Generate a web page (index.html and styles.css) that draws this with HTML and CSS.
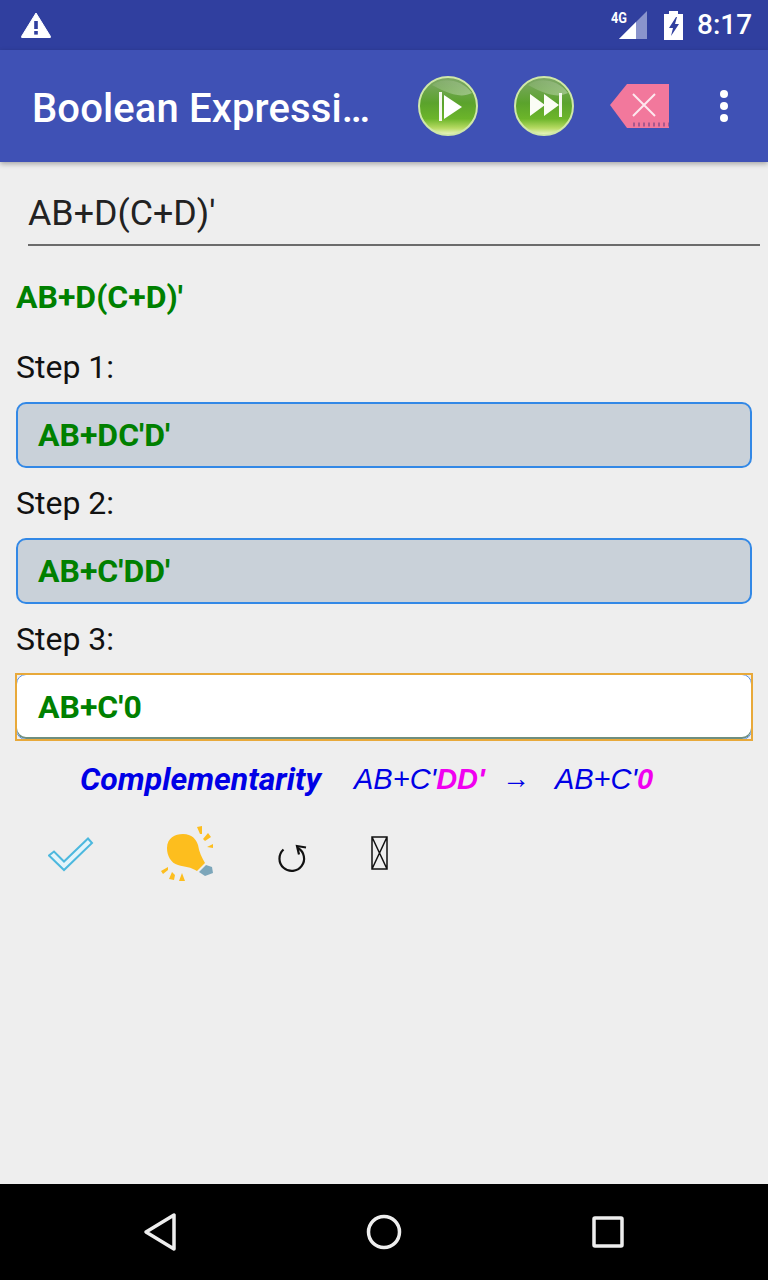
FILE: index.html
```html
<!DOCTYPE html>
<html lang="en">
<head>
<meta charset="utf-8">
<title>Boolean Expressions</title>
<link rel="stylesheet" href="styles.css">
</head>
<body>
<div class="phone">
  <header class="status">
    <svg class="warn" width="30" height="26" viewBox="0 0 30 26"><path d="M15 1 L29.500 24.500 a.6 .6 0 0 1 -.5 1 H1 a.6 .6 0 0 1 -.5 -1 Z" fill="#fff" stroke="#fff" stroke-linejoin="round"/><rect x="13.200" y="9" width="3.600" height="8" fill="#303f9f"/><rect x="13.200" y="19" width="3.600" height="3.600" fill="#303f9f"/></svg>
    <div class="status-right">
      <div class="signal">
        <span class="net">4G</span>
        <svg class="bars" width="28" height="28" viewBox="0 0 28 28"><path d="M28 0V28H0Z" fill="#8a94cc"/><path d="M17 11V28H0Z" fill="#fff"/></svg>
      </div>
      <svg class="batt" width="20" height="29" viewBox="0 0 20 29"><path d="M5 0h9v3h5v26H0V3h5Z" fill="#fff"/><path d="M12 6 L5 17h4l-2 8 8-12h-4l2-7Z" fill="#303f9f"/></svg>
      <span class="clock">8:17</span>
    </div>
  </header>
  <nav class="appbar">
    <h1 class="title">Boolean Expressi…</h1>
    <div class="actions">
      <svg class="act" width="60" height="60" viewBox="0 0 60 60"><use href="#orb"/><rect x="21" y="16" width="3" height="29" fill="#f4f8ee"/><path d="M26 19 L44 31 L26 43Z" fill="#fff"/></svg>
      <svg class="act" width="60" height="60" viewBox="0 0 60 60"><use href="#orb"/><path d="M16 18 L31 29 L16 40Z M30 18 L45 29 L30 40Z" fill="#fbfdf5"/><rect x="45" y="17" width="3" height="24" fill="#f4f8ee"/></svg>
      <svg class="act" width="60" height="45" viewBox="0 0 60 45"><path d="M17 0H59V44H17L0 21Z" fill="#f2789c"/><path d="M23 40.500H59" stroke="#a8588e" stroke-width="4" stroke-dasharray="2 3"/><path d="M23 10 L45 32 M45 10 L23 32" stroke="#fde8ee" stroke-width="2"/></svg>
      <div class="more"><i></i><i></i><i></i></div>
    </div>
  </nav>
  <main class="content">
    <div class="input">AB+D(C+D)'</div>
    <p class="expr">AB+D(C+D)'</p>
    <p class="step first">Step 1:</p>
    <div class="box">AB+DC'D'</div>
    <p class="step">Step 2:</p>
    <div class="box">AB+C'DD'</div>
    <p class="step">Step 3:</p>
    <div class="box current"><div class="inner">AB+C'0</div></div>
    <p class="rule"><b class="rule-name">Complementarity</b><span class="eq">AB+C'<b class="hl">DD'</b></span><span class="arrow">→</span><span class="eq">AB+C'<b class="hl">0</b></span></p>
    <div class="tools">
      <svg class="check" width="46" height="38" viewBox="0 0 46 38"><path d="M1 19.500 L16 34 L44 7 L40 2.500 L16 25.500 L6 15.500 Z" fill="#e3f4fa" stroke="#4cb8de" stroke-width="2"/></svg>
      <svg class="bulb" width="54" height="56" viewBox="0 0 54 56"><path d="M45 39 L38 46 L44 50 L52 47 L51 41Z" fill="#7ca6ba"/><path d="M6 22 C6 12 14 8 22 8 C31 8 35 13 37 19 C38 26 41 32 44 37 L36 45 C30 41 24 41 17 39 C10 37 6 30 6 22Z" fill="#fdbe1e"/><path d="M36 1 L41 0 L41 8 L39 8Z M42 13 L47 7 L50 11 L44 15Z M46 21 L52 18 L52 22Z M0 45 L7 41 L7 44 L2 48Z M8 53 L11 46 L14 49 L13 54Z M21 47 L24 55 L18 55Z" fill="#fdbe1e"/></svg>
      <svg class="undo" width="30" height="32" viewBox="0 0 30 32"><path d="M6.500 6.500 A12.300 12.300 0 1 0 21 5" fill="none" stroke="#111" stroke-width="2.200"/><path d="M29 4.500 L20 3 L22 11.500" fill="none" stroke="#111" stroke-width="2.200"/></svg>
      <svg class="tofu" width="17" height="34" viewBox="0 0 17 34"><path d="M1 1H16V33H1ZM1 1L16 33M16 1L1 33" fill="none" stroke="#111" stroke-width="1.500"/></svg>
    </div>
  </main>
  <footer class="navbar">
    <svg width="36" height="40" viewBox="0 0 36 40"><path d="M34 3V37L6 20Z" fill="none" stroke="#eee" stroke-width="3.500" stroke-linejoin="round"/></svg>
    <svg width="36" height="36" viewBox="0 0 36 36"><circle cx="18" cy="18" r="15.500" fill="none" stroke="#eee" stroke-width="3.500"/></svg>
    <svg width="32" height="32" viewBox="0 0 32 32"><rect x="2" y="2" width="28" height="28" rx="1" fill="none" stroke="#eee" stroke-width="3.500"/></svg>
  </footer>
</div>
<svg class="defs" width="0" height="0">
  <defs>
    <linearGradient id="orbFill" x1="0" y1="0" x2="0" y2="1">
      <stop offset="0" stop-color="#7fa76a"/><stop offset=".45" stop-color="#5ba32c"/><stop offset=".72" stop-color="#6cb52a"/><stop offset=".88" stop-color="#b6da62"/><stop offset="1" stop-color="#eef8cc"/>
    </linearGradient>
    <linearGradient id="shine" x1="0" y1="0" x2="1" y2="1">
      <stop offset="0" stop-color="#fff" stop-opacity=".05"/><stop offset="1" stop-color="#fff" stop-opacity=".35"/>
    </linearGradient>
    <g id="orb">
      <circle cx="30" cy="30" r="29" fill="url(#orbFill)" stroke="#cfe8a8" stroke-width="2"/>
      <path d="M14 9 C24 1 44 3 54 17 C40 24 24 14 14 9Z" fill="url(#shine)"/>
    </g>
  </defs>
</svg>
</body>
</html>
```
FILE: styles.css
```css
* { box-sizing: border-box; }
html, body { margin: 0; padding: 0; }
body { width: 768px; height: 1280px; overflow: hidden; font-family: Roboto, sans-serif; }
.phone { width: 768px; height: 1280px; display: flex; flex-direction: column; background: #eeeeee; position: relative; }
.defs { position: absolute; }

.status { height: 50px; flex: none; background: #303f9f; display: flex; align-items: center; justify-content: space-between; padding: 0 16px 0 21px; color: #fff; }
.warn { display: block; }
.status-right { display: flex; align-items: center; }
.signal { display: flex; align-items: flex-start; position: relative; width: 36px; height: 30px; margin-right: 17px; justify-content: flex-end; }
.bars { display: block; margin-top: 1px; }
.net { position: absolute; left: 0; top: 0; font-size: 15px; font-weight: 700; line-height: 17px; transform: scaleX(.85); transform-origin: left; }
.batt { margin-right: 13px; }
.clock { font-size: 28px; font-weight: 500; line-height: 32px; width: 55px; }

.appbar { height: 112px; flex: none; background: #3f51b5; display: flex; align-items: center; justify-content: space-between; padding: 0 39px 0 32px; box-shadow: 0 2px 5px rgba(0,0,0,.3); position: relative; z-index: 1; color: #fff; }
.title { margin: 6px 0 0; font-size: 40px; font-weight: 500; line-height: 48px; letter-spacing: .12px; white-space: nowrap; }
.actions { display: flex; align-items: center; position: relative; }
.act { display: block; margin-right: 36px; }
.act:nth-child(3) { margin-right: 48px; }
.more { display: flex; flex-direction: column; gap: 4px; width: 12px; margin-right: -1px; }
.more i { display: block; width: 8px; height: 8px; border-radius: 50%; background: #fff; margin-left: 2px; }

.content { flex: 1; display: flex; flex-direction: column; padding: 0 16px; }
.input { margin: 28px -8px 0 12px; height: 56px; border-bottom: 2px solid #6b6b6b; font-size: 35.8px; line-height: 46px; color: #222; }
.expr { margin: 32px 0 0; font-size: 32px; font-weight: 700; line-height: 38px; color: #008000; }
.step { margin: 16px 0; font-size: 32px; line-height: 38px; color: #111; height: 38px; }
.step.first { margin-top: 32px; }
.box { height: 66px; border: 2px solid #3288e6; border-radius: 10px; background: #c9d1d9; padding: 0 20px; font-size: 32px; font-weight: 700; line-height: 62px; color: #008000; }
.box.current { background: transparent; border: 0; border-radius: 0; padding: 0; outline: 2px solid #e8a93a; outline-offset: -1px; }
.inner { height: 66px; border: 1px solid #5a90e0; border-radius: 10px; background: #fff; padding: 0 21px; line-height: 64px; box-shadow: inset 0 -2px 0 #6f8f80; }
.rule { margin: 19px 0 0; font-size: 29px; line-height: 40px; font-style: italic; color: #0000e6; white-space: nowrap; padding-left: 64px; display: flex; }
.rule-name { font-weight: 700; font-size: 32px; margin-right: 33px; }
.eq { font-family: "Liberation Sans", sans-serif; }
.hl { color: #f000f0; font-weight: 700; }
.arrow { font-style: normal; font-family: "Liberation Serif", serif; font-size: 28px; margin: 0 25px 0 17px; }
.tools { display: flex; align-items: flex-start; margin-top: 20px; }
.check { margin: 17px 0 0 32px; }
.bulb { margin: 7px 0 0 67px; }
.undo { margin: 24px 0 0 62px; }
.tofu { margin: 17px 0 0 64px; }

.navbar { height: 96px; flex: none; background: #000; display: flex; align-items: center; justify-content: space-between; padding: 0 144px 0 140px; }
```
